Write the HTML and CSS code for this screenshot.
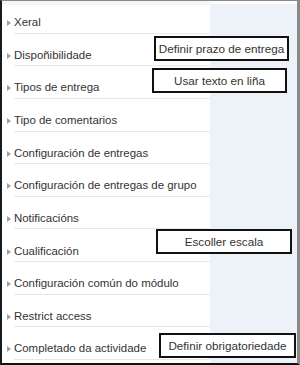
FILE: index.html
```html
<!DOCTYPE html>
<html lang="gl">
<head>
    <meta charset="UTF-8">
    <title>Configuración</title>
    <link rel="stylesheet" href="styles.css">
</head>
<body>
    <div class="frame">
        <ul class="list">
            <li><span class="arrow"></span><span class="label">Xeral</span></li>
            <li><span class="arrow"></span><span class="label">Dispoñibilidade</span></li>
            <li><span class="arrow"></span><span class="label">Tipos de entrega</span></li>
            <li><span class="arrow"></span><span class="label">Tipo de comentarios</span></li>
            <li><span class="arrow"></span><span class="label">Configuración de entregas</span></li>
            <li><span class="arrow"></span><span class="label">Configuración de entregas de grupo</span></li>
            <li><span class="arrow"></span><span class="label">Notificacións</span></li>
            <li><span class="arrow"></span><span class="label">Cualificación</span></li>
            <li><span class="arrow"></span><span class="label">Configuración común do módulo</span></li>
            <li><span class="arrow"></span><span class="label">Restrict access</span></li>
            <li><span class="arrow"></span><span class="label">Completado da actividade</span></li>
        </ul>
        <div class="side"></div>

        <div class="note note1">Definir prazo de entrega</div>
        <div class="note note2">Usar texto en liña</div>
        <div class="note note3">Escoller escala</div>
        <div class="note note4">Definir obrigatoriedade</div>
    </div>
</body>
</html>
```

FILE: styles.css
```css
*{
    margin: 0;
    padding: 0;
    box-sizing: border-box;
}
body{
    font-family: "Liberation Sans", Arial, sans-serif;
    background: #fff;
}
li{
    list-style: none;
}
.frame{
    position: relative;
    display: flex;
    width: 300px;
    height: 365px;
    border-top: 1px solid #8a8a8a;
    border-right: 3px solid #8a8a8a;
    border-bottom: 2px solid #111;
    border-left: 2px solid #1a1a1a;
    background: #fff;
}
.list{
    width: 208px;
    background: linear-gradient(#f6f6f6 0 4px, #fff 4px);
}
.list li{
    display: flex;
    height: 32.63px;
}
.arrow{
    width: 12px;
    display: flex;
    align-items: flex-end;
    padding-bottom: 7.5px;
}
.arrow::before{
    content: "";
    margin-left: 5px;
    border-left: 4px solid #a0a0a0;
    border-top: 3.5px solid transparent;
    border-bottom: 3.5px solid transparent;
}
.label{
    flex: 1;
    display: flex;
    align-items: flex-end;
    padding-bottom: 3.5px;
    border-bottom: 1px solid #e8e8e8;
    font-size: 11.45px;
    line-height: 14px;
    color: #333;
    white-space: nowrap;
}
.side{
    flex: 1;
    margin-top: 3px;
    background: #edf1f8;
}
.note{
    position: absolute;
    height: 25px;
    border: 2px solid #111;
    background: #fff;
    font-size: 11.7px;
    line-height: 21px;
    text-align: center;
    color: #333;
    white-space: nowrap;
}
.note1{
    left: 152px;
    top: 35px;
    width: 135px;
}
.note2{
    left: 150px;
    top: 67px;
    width: 135px;
}
.note3{
    left: 154px;
    top: 228px;
    width: 136px;
}
.note4{
    left: 157px;
    top: 332px;
    width: 137px;
}
```
